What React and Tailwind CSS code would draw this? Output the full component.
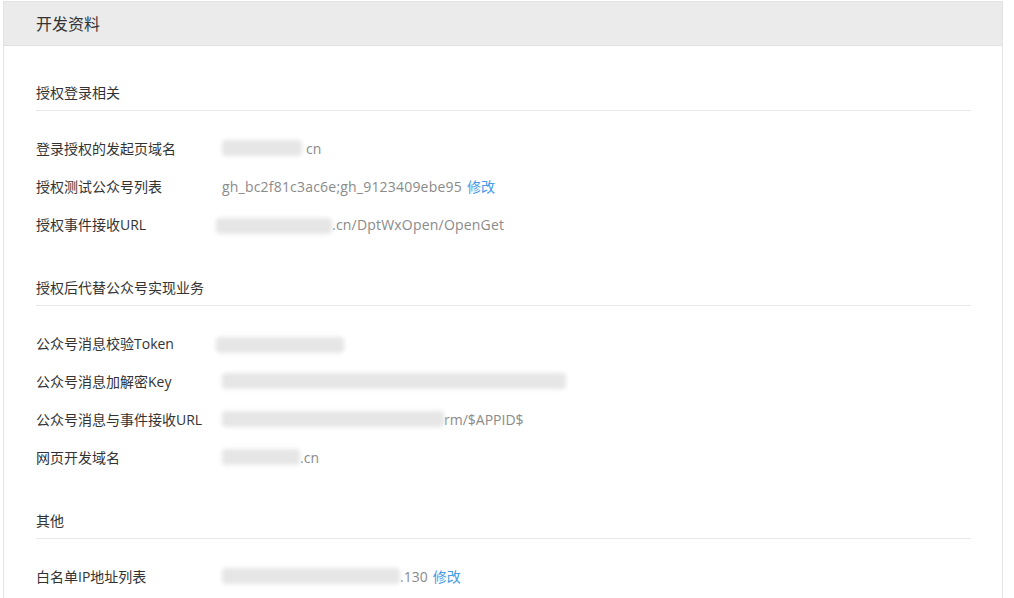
import React from 'react';

const Blur = ({ w }) => (
    <span
        className="inline-block h-[16px] align-middle bg-[#e6e6e6] rounded-sm blur-[2px]"
        style={{ width: w }}
    />
);

const Row = ({ label, children }) => (
    <div className="flex items-center h-[38px]">
        <div className="w-[186px] shrink-0 text-[#333]">{label}</div>
        <div className="flex items-center text-[#8a8a8a]">{children}</div>
    </div>
);

const Section = ({ title, children }) => (
    <div>
        <div className="h-[33px] flex items-end pb-[7px] border-b border-[#e7e7e7] text-[#333]">{title}</div>
        <div className="pt-[18px]">{children}</div>
    </div>
);

const Edit = () => <a className="ml-[5px] text-[#459ae9] cursor-pointer">修改</a>;

export default function App() {
    return (
        <div className="w-[1014px] h-[598px] overflow-hidden bg-white pl-[3px] pt-[1px] text-[14px]" style={{ fontFamily: '"Open Sans", "Noto Sans CJK SC", sans-serif' }}>
            <div className="w-[1000px] border border-[#e3e3e3] bg-white pb-[40px]">
                <div className="h-[44px] bg-[#ebebeb] border-b border-[#e0e0e0] flex items-center px-[32px] text-[16px] text-[#333]">
                    开发资料
                </div>
                <div className="px-[32px] pt-[32px] pr-[31px] flex flex-col gap-[30px]">
                    <Section title="授权登录相关">
                        <Row label="登录授权的发起页域名">
                            <Blur w={80} />
                            <span className="ml-[4px]">cn</span>
                        </Row>
                        <Row label="授权测试公众号列表">
                            <span className="tracking-[0.2px]">gh_bc2f81c3ac6e;gh_9123409ebe95</span><Edit />
                        </Row>
                        <Row label="授权事件接收URL">
                            <span className="-ml-[6px]"><Blur w={116} /></span>
                            <span className="tracking-[0.2px]">.cn/DptWxOpen/OpenGet</span>
                        </Row>
                    </Section>
                    <Section title="授权后代替公众号实现业务">
                        <Row label="公众号消息校验Token">
                            <span className="-ml-[6px]"><Blur w={128} /></span>
                        </Row>
                        <Row label="公众号消息加解密Key">
                            <Blur w={344} />
                        </Row>
                        <Row label="公众号消息与事件接收URL">
                            <Blur w={222} />
                            <span>rm/$APPID$</span>
                        </Row>
                        <Row label="网页开发域名">
                            <Blur w={78} />
                            <span>.cn</span>
                        </Row>
                    </Section>
                    <Section title="其他">
                        <Row label="白名单IP地址列表">
                            <Blur w={178} />
                            <span>.130</span><Edit />
                        </Row>
                    </Section>
                </div>
            </div>
        </div>
    );
}
